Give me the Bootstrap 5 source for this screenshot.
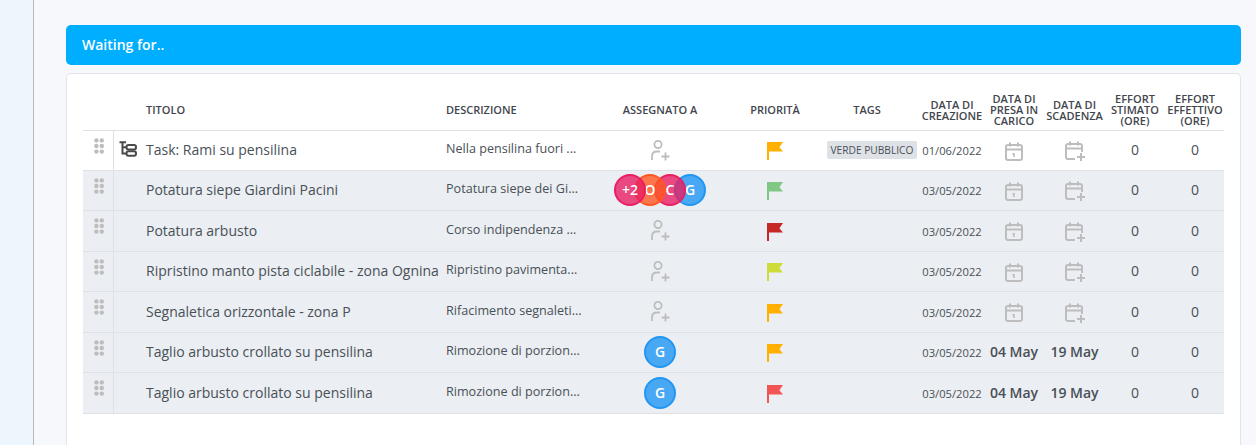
<!DOCTYPE html>
<html lang="it">
<head>
  <meta charset="UTF-8">
  <title>Waiting for</title>
  <meta name="viewport" content="width=device-width, initial-scale=1">
  <link href="https://cdn.jsdelivr.net/npm/bootstrap@5.3.3/dist/css/bootstrap.min.css" rel="stylesheet">
  <style>
    html, body { height: 100%; overflow: hidden; }
    body { font-family: "Open Sans", sans-serif; background: #f6f8fb; color: #495057; }
    .side-strip { width: 34px; flex: none; background: #edf5fd; border-right: 1px solid #b5bac1; }
    .main-area { padding: 25px 15px 0 32px; min-width: 0; }
    .waiting-bar { background: #00aeff; color: #fff; font-size: 14px; font-weight: 600; height: 40px; line-height: 40px; padding: 0 16px; border-radius: 5px; margin-bottom: 8px; }
    .task-card { border-color: #e1e4e8; border-radius: 5px; height: 400px; padding: 16px; }
    .task-table { table-layout: fixed; width: 1141px; margin: 0; border-collapse: collapse; }
    .task-table th, .task-table td { padding: 0; background: transparent; box-shadow: none; color: #495057; vertical-align: middle; border-bottom: 1px solid #dee2e6; }
    .task-table th { height: 40px; font-size: 11px; line-height: 11px; font-weight: 600; text-transform: uppercase; text-align: center; color: #3f464d; }
    .task-table th.tl { text-align: left; }
    .task-table tr > :last-child { padding-left: 1px; }
    .task-table tbody tr { height: 40px; }
    .task-table tbody tr:nth-child(2n+3) { height: 41px; }
    .task-table tbody tr.grey-row td { background: #ebeef2; }
    .c-drag { width: 30px; } .c-sub { width: 33px; } .c-title { width: 300px; } .c-desc { width: 138px; }
    .c-asg { width: 152px; } .c-pri { width: 78px; } .c-tag { width: 106px; } .c-crea { width: 64px; }
    .c-presa { width: 60px; } .c-scad { width: 61px; } .c-stim { width: 60px; } .c-eff { width: 59px; }
    .task-table td.drag-cell { border-right: 1px solid #dee2e6; vertical-align: top; text-align: center; padding: 7px 0 0 2px; line-height: 0; }
    .task-table td.sub-cell { line-height: 0; padding: 0 0 2px 5px; }
    .task-table td.t-title { font-size: 14px; white-space: nowrap; padding-bottom: 2px; }
    .task-table td.t-desc { font-size: 12.6px; white-space: nowrap; padding-bottom: 2px; }
    .task-table td.t-date { font-size: 11.2px; text-align: center; white-space: nowrap; padding-top: 3px; }
    .task-table td.t-mid { text-align: center; line-height: 0; }
    .task-table td.t-flag, .task-table td.t-cal { padding-top: 2px; }
    .task-table td.t-num { font-size: 14px; text-align: center; padding-bottom: 2px; }
    .task-table td.t-when { font-size: 14px; font-weight: 600; text-align: center; white-space: nowrap; padding-bottom: 2px; }
    .task-table tbody tr:nth-child(2n+3) td.t-title,
    .task-table tbody tr:nth-child(2n+3) td.t-desc,
    .task-table tbody tr:nth-child(2n+3) td.t-num,
    .task-table tbody tr:nth-child(2n+3) td.t-when { padding-bottom: 0; }
    .tag-chip { display: inline-block; background: #dee2e6; border-radius: 2px; color: #495057; font-size: 10.2px; line-height: 18px; padding: 0 4px; white-space: nowrap; text-transform: uppercase; margin-left: 10px; }
    .avatar-stack { display: inline-flex; line-height: 1; }
    .avatar-dot { position: relative; width: 32px; height: 32px; border-radius: 50%; border: 2px solid; color: #fff; font-size: 14px; font-weight: 600; display: flex; align-items: center; justify-content: center; margin-left: -12px; }
    .avatar-dot:first-child { margin-left: 0; }
    .av-blue { background: rgba(33,150,243,.8); border-color: #2196f3; }
    .av-pink { background: rgba(233,30,99,.8); border-color: rgba(233,30,99,.95); }
    .av-orange { background: rgba(255,87,34,.8); border-color: rgba(255,87,34,.95); }
    .task-table td .ico-grey, .task-table td.ico-grey { color: #bdbdbd; }
  </style>
</head>
<body>

<svg width="0" height="0" class="position-absolute">
  <symbol id="i-drag" viewBox="0 0 10 16">
    <g fill="#bdbdbd">
      <circle cx="2.4" cy="2.4" r="2.2"/><circle cx="7.8" cy="2.4" r="2.2"/>
      <circle cx="2.4" cy="8" r="2.2"/><circle cx="7.8" cy="8" r="2.2"/>
      <circle cx="2.4" cy="13.6" r="2.2"/><circle cx="7.8" cy="13.6" r="2.2"/>
    </g>
  </symbol>
  <symbol id="i-tree" viewBox="0 0 18 16">
    <g fill="none" stroke="#4a4a4a" stroke-width="2">
      <path d="M0.5 1.2H7M3.5 1.2V12.5H7.5M3.5 6.3H7.5"/>
      <rect x="7.5" y="4" width="9.5" height="4.6" rx="2"/>
      <rect x="7.5" y="10.2" width="9.5" height="4.6" rx="2"/>
    </g>
  </symbol>
  <symbol id="i-user" viewBox="0 0 19 21">
    <g fill="none" stroke="currentColor" stroke-width="1.8">
      <circle cx="7" cy="4.5" r="3.6"/>
      <path d="M1 20V16.5C1 13.5 3 11.5 6 11.5H9"/>
      <path d="M10.5 16.5H18.5M14.5 12.5V20.5"/>
    </g>
  </symbol>
  <symbol id="i-flag" viewBox="0 0 16 18">
    <path fill="currentColor" d="M0 0H16L12.4 5.2L16 9.6H2V18H0Z"/>
  </symbol>
  <symbol id="i-cal" viewBox="0 0 18 19">
    <g fill="none" stroke="currentColor" stroke-width="2">
      <rect x="1" y="3" width="16" height="15" rx="2"/>
      <path d="M1 7.5H17M5 0.5V4.5M13 0.5V4.5"/>
    </g>
    <path fill="currentColor" d="M8.2 11H9.8V15H8.2V12.2L7.2 12.6V11.6Z"/>
  </symbol>
  <symbol id="i-calplus" viewBox="0 0 20 20">
    <g fill="none" stroke="currentColor" stroke-width="2">
      <path d="M10 18H3C2 18 1 17 1 16V5C1 4 2 3 3 3H15C16 3 17 4 17 5V11"/>
      <path d="M1 7.5H17M5 0.5V4.5M13 0.5V4.5"/>
      <path d="M12 16H20M16 12V20"/>
    </g>
  </symbol>
</svg>

<div class="d-flex h-100">
  <div class="side-strip"></div>
  <div class="main-area flex-grow-1">
    <div class="waiting-bar">Waiting for..</div>
    <div class="card task-card">
      <table class="table task-table">
        <colgroup>
          <col class="c-drag"><col class="c-sub"><col class="c-title"><col class="c-desc"><col class="c-asg"><col class="c-pri"><col class="c-tag"><col class="c-crea"><col class="c-presa"><col class="c-scad"><col class="c-stim"><col class="c-eff">
        </colgroup>
        <thead>
          <tr>
            <th></th>
            <th></th>
            <th class="tl">Titolo</th>
            <th class="tl">Descrizione</th>
            <th>Assegnato a</th>
            <th>Priorità</th>
            <th>Tags</th>
            <th>Data di creazione</th>
            <th>Data di presa in carico</th>
            <th>Data di scadenza</th>
            <th>Effort stimato (ore)</th>
            <th>Effort effettivo (ore)</th>
          </tr>
        </thead>
        <tbody id="taskRows"></tbody>
      </table>
    </div>
  </div>
</div>

<script src="https://cdn.jsdelivr.net/npm/bootstrap@5.3.3/dist/js/bootstrap.bundle.min.js"></script>
<script>
const tasks = [
  {title: "Task: Rami su pensilina", desc: "Nella pensilina fuori ...", flag: "#ffb000", date: "01/06/2022", tag: "Verde pubblico", tree: true},
  {title: "Potatura siepe Giardini Pacini", desc: "Potatura siepe dei Gi...", flag: "#81c784", date: "03/05/2022", people: [["+2","pink"],["O","orange"],["C","pink"],["G","blue"]]},
  {title: "Potatura arbusto", desc: "Corso indipendenza ...", flag: "#c62828", date: "03/05/2022"},
  {title: "Ripristino manto pista ciclabile - zona Ognina", desc: "Ripristino pavimenta...", flag: "#cddc39", date: "03/05/2022"},
  {title: "Segnaletica orizzontale - zona P", desc: "Rifacimento segnaleti...", flag: "#ffb000", date: "03/05/2022"},
  {title: "Taglio arbusto crollato su pensilina", desc: "Rimozione di porzion...", flag: "#ffb000", date: "03/05/2022", people: [["G","blue"]], start: "04 May", end: "19 May"},
  {title: "Taglio arbusto crollato su pensilina", desc: "Rimozione di porzion...", flag: "#f25555", date: "03/05/2022", people: [["G","blue"]], start: "04 May", end: "19 May"}
];

function icon(name, w, h) {
  return `<svg width="${w}" height="${h}"><use href="#${name}"></use></svg>`;
}

function renderRows() {
  const tbody = document.getElementById("taskRows");
  tasks.forEach((t, i) => {
    const people = t.people
      ? `<div class="avatar-stack">${t.people.map((p, n) => `<div class="avatar-dot av-${p[1]}" style="z-index:${9 - n}">${p[0]}</div>`).join("")}</div>`
      : `<span class="ico-grey">${icon("i-user", 19, 21)}</span>`;
    const row = document.createElement("tr");
    if (i > 0) row.className = "grey-row";
    row.innerHTML = `
      <td class="drag-cell">${icon("i-drag", 10, 16)}</td>
      <td class="sub-cell">${t.tree ? icon("i-tree", 18, 16) : ""}</td>
      <td class="t-title">${t.title}</td>
      <td class="t-desc">${t.desc}</td>
      <td class="t-mid">${people}</td>
      <td class="t-mid t-flag"><svg width="16" height="18" style="color:${t.flag}"><use href="#i-flag"></use></svg></td>
      <td class="t-mid">${t.tag ? `<span class="tag-chip">${t.tag}</span>` : ""}</td>
      <td class="t-date">${t.date}</td>
      ${t.start ? `<td class="t-when">${t.start}</td>` : `<td class="t-mid t-cal ico-grey">${icon("i-cal", 18, 19)}</td>`}
      ${t.end ? `<td class="t-when">${t.end}</td>` : `<td class="t-mid t-cal ico-grey">${icon("i-calplus", 20, 20)}</td>`}
      <td class="t-num">0</td>
      <td class="t-num">0</td>`;
    tbody.appendChild(row);
  });
}

document.addEventListener("DOMContentLoaded", renderRows);
</script>
</body>
</html>
